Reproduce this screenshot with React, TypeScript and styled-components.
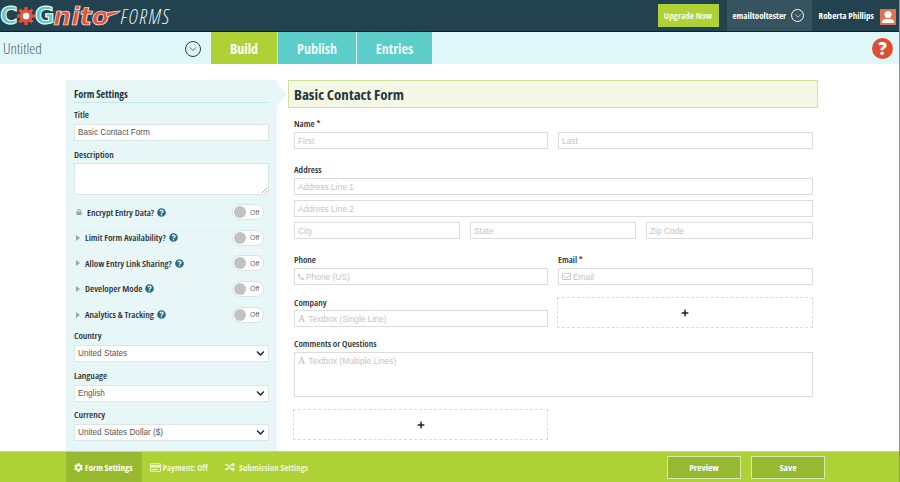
import React from 'react';
import styled, { createGlobalStyle } from 'styled-components';
import { ChevronDown } from 'lucide-react';
import { FaCog, FaRandom, FaRegCreditCard, FaRegEnvelope, FaPhoneAlt, FaQuestionCircle, FaLock, FaPlus, FaChevronDown } from 'react-icons/fa';

const condensed = `'Open Sans', 'Noto Sans', sans-serif`;

const GlobalStyle = createGlobalStyle`
  html, body {
    margin: 0;
    padding: 0;
    height: 482px;
    overflow: hidden;
    background: #fff;
    font-family: ${condensed};
  }
`;

const settings = [
  { label: 'Encrypt Entry Data?', locked: true },
  { label: 'Limit Form Availability?' },
  { label: 'Allow Entry Link Sharing?' },
  { label: 'Developer Mode' },
  { label: 'Analytics & Tracking' },
];

const selects = [
  { label: 'Country', value: 'United States' },
  { label: 'Language', value: 'English' },
  { label: 'Currency', value: 'United States Dollar ($)' },
];

const Gear = () => (
  <svg width="18" height="18" viewBox="0 0 22 22">
    <g fill="#e2533a">
      <circle cx="11" cy="11" r="8" />
      {[0, 45, 90, 135, 180, 225, 270, 315].map((a) => (
        <rect key={a} x="9" y="0" width="4" height="5" transform={`rotate(${a} 11 11)`} />
      ))}
    </g>
    <circle cx="11" cy="11" r="4" fill="#fff" />
  </svg>
);

const App: React.FC = () => {
  return (
    <Page>
      <GlobalStyle />
      <TopBar>
        <Logo>
          <LogoCog>C</LogoCog>
          <Gear />
          <LogoCog>G</LogoCog>
          <LogoScript>nito</LogoScript>
          <LogoSwoosh viewBox="0 0 15 8">
            <path d="M0 2.500L14.500 1 11 3.500 1 7z" fill="#e2533a" stroke="#fff" strokeWidth="0.7" />
          </LogoSwoosh>
          <LogoForms>FORMS</LogoForms>
        </Logo>
        <TopRight>
          <UpgradeBtn>Upgrade Now</UpgradeBtn>
          <AccountMenu>
            emailtooltester
            <CircleChevron $size={13} $color="#fff" $top={0}>
              <ChevronDown size={10} strokeWidth={1.6} />
            </CircleChevron>
          </AccountMenu>
          <UserName>Roberta Phillips</UserName>
          <Avatar>
            <svg width="16" height="16" viewBox="0 0 16 16">
              <circle cx="8" cy="5.500" r="3.500" fill="#fff" />
              <path d="M2 14v-1.500c0-1.500 2-2.500 3.500-2.500h5c1.500 0 3.500 1 3.500 2.500V14z" fill="#fff" />
            </svg>
          </Avatar>
        </TopRight>
      </TopBar>

      <SubBar>
        <FormName>
          <FormNameText>Untitled</FormNameText>
          <CircleChevron $size={16} $color="#22424f" $top={2}>
            <ChevronDown size={12} strokeWidth={1.5} />
          </CircleChevron>
        </FormName>
        <Tab $active $width={66}>Build</Tab>
        <Tab $width={78}>Publish</Tab>
        <Tab $width={75}>Entries</Tab>
        <HelpBadge>?</HelpBadge>
      </SubBar>

      <Main>
        <Sidebar>
          <SidebarHeading>Form Settings</SidebarHeading>
          <FieldLabel $top={5}>Title</FieldLabel>
          <SideInput>Basic Contact Form</SideInput>
          <FieldLabel $top={7}>Description</FieldLabel>
          <SideTextarea>
            <ResizeGrip viewBox="0 0 8 8">
              <path d="M1 7l6-6M4.500 7L7 4.500" stroke="#999" strokeWidth="0.8" />
            </ResizeGrip>
          </SideTextarea>
          <SettingsList>
            {settings.map((s) => (
              <SettingRow key={s.label}>
                {s.locked ? (
                  <LockSlot>
                    <FaLock size={6} color="#9aa5a8" />
                  </LockSlot>
                ) : (
                  <Caret />
                )}
                <SettingLabel>{s.label}</SettingLabel>
                <FaQuestionCircle size={9} color="#2f6b80" />
                <Toggle>
                  <Knob />
                  Off
                </Toggle>
              </SettingRow>
            ))}
          </SettingsList>
          {selects.map((s) => (
            <SelectGroup key={s.label}>
              <FieldLabel $top={0}>{s.label}</FieldLabel>
              <SideInput>
                {s.value}
                <FaChevronDown size={9} color="#222" />
              </SideInput>
            </SelectGroup>
          ))}
        </Sidebar>

        <Notch />

        <FormArea>
          <FormTitle>Basic Contact Form</FormTitle>
          <FormBody>
            <Row $top={7}>
              <FormLabel>Name <Required>*</Required></FormLabel>
              <TwoCols>
                <FormInput $top={1}>First</FormInput>
                <FormInput $top={1}>Last</FormInput>
              </TwoCols>
            </Row>
            <Row $top={12}>
              <FormLabel>Address</FormLabel>
              <FormInput $top={1}>Address Line 1</FormInput>
              <FormInput $top={5}>Address Line 2</FormInput>
              <ThreeCols>
                <FormInput>City</FormInput>
                <FormInput>State</FormInput>
                <FormInput>Zip Code</FormInput>
              </ThreeCols>
            </Row>
            <Row $top={12}>
              <TwoCols>
                <div>
                  <FormLabel>Phone</FormLabel>
                  <FormInput $top={1}>
                    <FaPhoneAlt size={6} color="#c4c4c4" />
                    Phone (US)
                  </FormInput>
                </div>
                <div>
                  <FormLabel>Email <Required>*</Required></FormLabel>
                  <FormInput $top={1}>
                    <FaRegEnvelope size={9} color="#c4c4c4" />
                    Email
                  </FormInput>
                </div>
              </TwoCols>
            </Row>
            <Row $top={9}>
              <TwoCols>
                <div>
                  <FormLabel>Company</FormLabel>
                  <FormInput>
                    <SerifA>A</SerifA>
                    Textbox (Single Line)
                  </FormInput>
                </div>
                <DropZone $top={3}>
                  <FaPlus size={8} color="#222" />
                </DropZone>
              </TwoCols>
            </Row>
            <Row $top={7}>
              <FormLabel>Comments or Questions</FormLabel>
              <FormTextarea $top={1}>
                <SerifA>A</SerifA>
                Textbox (Multiple Lines)
              </FormTextarea>
            </Row>
            <Row $top={12}>
              <TwoCols>
                <DropZone $top={0}>
                  <FaPlus size={8} color="#222" />
                </DropZone>
              </TwoCols>
            </Row>
          </FormBody>
        </FormArea>
      </Main>

      <Footer>
        <FooterTab $active $gap={2}>
          <FaCog size={9} />
          Form Settings
        </FooterTab>
        <FooterTab $gap={2}>
          <FaRegCreditCard size={11} />
          Payment: Off
        </FooterTab>
        <FooterTab $gap={4}>
          <FaRandom size={10} />
          Submission Settings
        </FooterTab>
        <FooterActions>
          <FooterBtn>Preview</FooterBtn>
          <FooterBtn>Save</FooterBtn>
        </FooterActions>
      </Footer>
      <ScrollEdge />
    </Page>
  );
};

export default App;

const Page = styled.div`
  position: relative;
  display: flex;
  flex-direction: column;
  width: 900px;
  height: 482px;
  overflow: hidden;
  background: #fff;
`;

const TopBar = styled.div`
  display: flex;
  justify-content: space-between;
  flex: 0 0 32px;
  box-sizing: border-box;
  height: 32px;
  background: #22424f;
  border-bottom: 1px solid #10222a;
`;

const Logo = styled.div`
  display: flex;
  align-items: center;
  height: 31px;
  padding-top: 1px;
  box-sizing: border-box;
`;

const LogoCog = styled.span`
  color: #5ccdc9;
  font-family: 'DejaVu Sans', sans-serif;
  font-size: 24px;
  font-weight: 700;
  line-height: 1;
  letter-spacing: -1px;
  -webkit-text-stroke: 1px #fff;
`;

const LogoScript = styled.span`
  color: #e2533a;
  font-family: 'DejaVu Sans', sans-serif;
  font-size: 25px;
  font-style: italic;
  font-weight: 700;
  line-height: 1;
  -webkit-text-stroke: 0.7px #fff;
`;

const LogoSwoosh = styled.svg`
  width: 15px;
  height: 8px;
  margin-left: -3px;
  margin-bottom: 5px;
`;

const LogoForms = styled.span`
  color: #e6eef0;
  font-family: ${condensed};
  font-size: 20px;
  font-style: italic;
  font-stretch: 75%;
  font-weight: 300;
  letter-spacing: 1.500px;
`;

const TopRight = styled.div`
  display: flex;
  align-items: stretch;
  height: 31px;
  margin-right: 4px;
`;

const UpgradeBtn = styled.div`
  display: flex;
  align-items: center;
  justify-content: center;
  align-self: center;
  width: 61px;
  height: 23px;
  margin-right: 8px;
  background: #aed136;
  color: #f4f8e4;
  font-size: 9.200px;
  font-stretch: 75%;
  font-weight: 700;
`;

const AccountMenu = styled.div`
  display: flex;
  align-items: center;
  gap: 5px;
  box-sizing: border-box;
  width: 85px;
  padding-left: 6px;
  background: #365460;
  color: #fff;
  font-size: 9px;
  font-stretch: 75%;
  font-weight: 700;
`;

const UserName = styled.div`
  display: flex;
  align-items: center;
  margin: 0 6px 0 7px;
  color: #fff;
  font-size: 9.100px;
  font-stretch: 75%;
  font-weight: 700;
`;

const Avatar = styled.div`
  display: flex;
  align-self: flex-start;
  width: 16px;
  height: 16px;
  margin-top: 9px;
  background: #e76f51;
`;

const CircleChevron = styled.span<{ $size: number; $color: string; $top: number }>`
  display: inline-flex;
  align-items: center;
  justify-content: center;
  box-sizing: border-box;
  width: ${({ $size }) => $size}px;
  height: ${({ $size }) => $size}px;
  margin-top: ${({ $top }) => $top}px;
  border: 1px solid ${({ $color }) => $color};
  border-radius: 50%;
  color: ${({ $color }) => $color};
`;

const SubBar = styled.div`
  display: flex;
  align-items: stretch;
  flex: 0 0 32px;
  background: #e0f7f9;
`;

const FormName = styled.div`
  display: flex;
  align-items: center;
  justify-content: space-between;
  box-sizing: border-box;
  width: 211px;
  padding: 0 10px 0 3px;
`;

const FormNameText = styled.span`
  color: #4e5a5e;
  font-size: 15px;
  font-stretch: 75%;
  font-weight: 300;
`;

const Tab = styled.div<{ $active?: boolean; $width: number }>`
  display: flex;
  align-items: center;
  justify-content: center;
  width: ${({ $width }) => $width}px;
  margin-right: 1px;
  background: ${({ $active }) => ($active ? '#aed136' : '#5ccdc9')};
  color: ${({ $active }) => ($active ? '#fff' : '#e8f9f8')};
  font-size: 14px;
  font-stretch: 75%;
  font-weight: 700;
`;

const HelpBadge = styled.div`
  display: flex;
  align-items: center;
  justify-content: center;
  align-self: center;
  width: 21px;
  height: 21px;
  margin-left: auto;
  margin-right: 7px;
  border-radius: 50%;
  background: #dc4f32;
  color: #fff;
  font-size: 17px;
  font-weight: 800;
`;

const Main = styled.div`
  display: flex;
  align-items: flex-start;
  flex: 1;
  min-height: 0;
  padding: 16px 0 0 66px;
  overflow: hidden;
`;

const Sidebar = styled.div`
  flex: 0 0 211px;
  box-sizing: border-box;
  height: 388px;
  padding: 8px 8px 0;
  background: #e7f6f7;
`;

const Notch = styled.div`
  flex: 0 0 11px;
  width: 0;
  height: 0;
  margin-top: 3px;
  box-sizing: border-box;
  border-left: 10px solid #e7f6f7;
  border-top: 11px solid transparent;
  border-bottom: 11px solid transparent;
`;

const SidebarHeading = styled.div`
  width: 195px;
  height: 14px;
  border-bottom: 1px solid #bfe9e8;
  color: #26383f;
  font-size: 10.200px;
  font-stretch: 75%;
  font-weight: 700;
  line-height: 12px;
`;

const FieldLabel = styled.div<{ $top: number }>`
  margin-top: ${({ $top }) => $top}px;
  height: 14px;
  color: #1f2d33;
  font-size: 9.500px;
  font-stretch: 75%;
  font-weight: 600;
  line-height: 14px;
`;

const SideInput = styled.div`
  display: flex;
  align-items: center;
  justify-content: space-between;
  box-sizing: border-box;
  width: 195px;
  height: 17px;
  margin-top: 2px;
  padding: 0 3px;
  background: #fff;
  border: 1px solid #dfe5e5;
  color: #555;
  font-family: 'Liberation Sans', sans-serif;
  font-size: 8.200px;
`;

const SideTextarea = styled.div`
  position: relative;
  box-sizing: border-box;
  width: 195px;
  height: 32px;
  margin-top: 1px;
  background: #fff;
  border: 1px solid #dfe5e5;
`;

const ResizeGrip = styled.svg`
  position: absolute;
  right: 0;
  bottom: 0;
  width: 7px;
  height: 7px;
`;

const SettingsList = styled.div`
  display: flex;
  flex-direction: column;
  margin-top: 5px;
`;

const SettingRow = styled.div`
  display: flex;
  align-items: center;
  gap: 3px;
  box-sizing: border-box;
  width: 195px;
  height: 25.500px;
  padding-left: 2px;
  border-bottom: 1px solid #eff9f9;

  &:last-child {
    border-bottom: none;
  }
`;

const LockSlot = styled.span`
  display: inline-flex;
  width: 8px;
`;

const Caret = styled.span`
  width: 0;
  height: 0;
  margin-right: 2px;
  border-left: 4px solid #9aa5a8;
  border-top: 3px solid transparent;
  border-bottom: 3px solid transparent;
`;

const SettingLabel = styled.span`
  color: #1f2d33;
  font-size: 9.500px;
  font-stretch: 75%;
  font-weight: 600;
`;

const Toggle = styled.div`
  display: flex;
  align-items: center;
  gap: 4px;
  box-sizing: border-box;
  width: 32px;
  height: 16px;
  margin-left: auto;
  margin-right: 5px;
  padding-left: 1px;
  background: #fff;
  border: 1px solid #d8e4e4;
  border-radius: 8px;
  color: #666;
  font-family: 'Liberation Sans', sans-serif;
  font-size: 7px;
`;

const Knob = styled.span`
  width: 12px;
  height: 12px;
  border-radius: 50%;
  background: #c2c2c2;
`;

const SelectGroup = styled.div`
  margin-top: 1.500px;

  & + & {
    margin-top: 6.500px;
  }
`;

const FormArea = styled.div`
  flex: 0 0 530px;
`;

const FormTitle = styled.div`
  display: flex;
  align-items: center;
  box-sizing: border-box;
  height: 28px;
  padding-left: 5px;
  background: #f4f8e4;
  border: 1px solid #cfe29a;
  color: #26383f;
  font-size: 15px;
  font-stretch: 75%;
  font-weight: 700;
`;

const FormBody = styled.div`
  display: flex;
  flex-direction: column;
  padding: 0 5px 0 6px;
`;

const Row = styled.div<{ $top: number }>`
  margin-top: ${({ $top }) => $top}px;
`;

const TwoCols = styled.div`
  display: grid;
  grid-template-columns: 254px 255px;
  gap: 10px;
`;

const ThreeCols = styled.div`
  display: grid;
  grid-template-columns: 166px 166px 167px;
  gap: 10px;
  margin-top: 5px;
`;

const FormLabel = styled.div`
  height: 16px;
  color: #1f2d33;
  font-size: 9.500px;
  font-stretch: 75%;
  font-weight: 600;
  line-height: 18px;
`;

const Required = styled.span`
  color: #a02020;
`;

const FormInput = styled.div<{ $top?: number }>`
  display: flex;
  align-items: center;
  gap: 2px;
  box-sizing: border-box;
  height: 17px;
  margin-top: ${({ $top }) => $top ?? 0}px;
  padding: 0 3px;
  border: 1px solid #dcdcdc;
  color: #c4c4c4;
  font-family: 'Liberation Sans', sans-serif;
  font-size: 8.400px;
`;

const FormTextarea = styled(FormInput)`
  align-items: flex-start;
  height: 45px;
  padding-top: 3px;
`;

const SerifA = styled.span`
  margin-right: 1px;
  color: #bbb;
  font-family: 'Liberation Serif', serif;
  font-size: 10px;
  line-height: 10px;
`;

const DropZone = styled.div<{ $top: number }>`
  display: flex;
  align-items: center;
  justify-content: center;
  box-sizing: border-box;
  height: 31px;
  margin-left: -1px;
  margin-top: ${({ $top }) => $top}px;
  border: 1px dashed #dcdcdc;
`;

const Footer = styled.div`
  display: flex;
  align-items: stretch;
  flex: 0 0 31px;
  box-sizing: border-box;
  padding-left: 66px;
  background: #aed136;
  border-top: 1px solid #c3de6a;
`;

const FooterTab = styled.div<{ $active?: boolean; $gap: number }>`
  display: flex;
  align-items: center;
  gap: ${({ $gap }) => $gap}px;
  padding: 0 9px 0 8px;
  background: ${({ $active }) => ($active ? '#96b92f' : 'transparent')};
  color: ${({ $active }) => ($active ? '#fff' : '#eef5d0')};
  font-size: 9px;
  font-stretch: 75%;
  font-weight: 700;
`;

const FooterActions = styled.div`
  display: flex;
  align-items: center;
  gap: 10px;
  margin-left: auto;
  margin-right: 75px;
`;

const FooterBtn = styled.div`
  display: flex;
  align-items: center;
  justify-content: center;
  box-sizing: border-box;
  width: 74px;
  height: 23px;
  background: #96b92f;
  border: 1px solid #dbe9ae;
  color: #fff;
  font-size: 9.500px;
  font-stretch: 75%;
  font-weight: 700;
`;

const ScrollEdge = styled.div`
  position: absolute;
  top: 0;
  right: 0;
  bottom: 0;
  width: 1px;
  background: #8a8f90;
`;
